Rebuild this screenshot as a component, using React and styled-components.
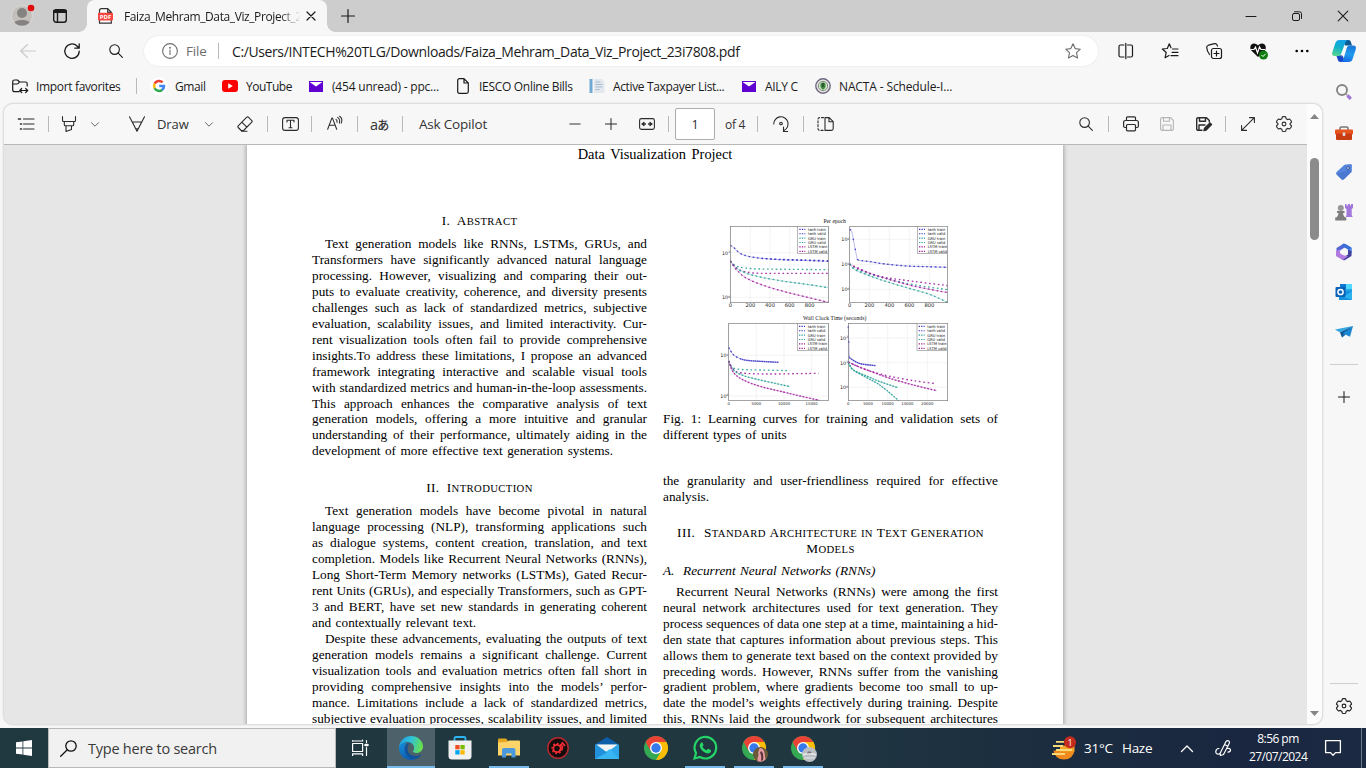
import React from "react";
import styled, { createGlobalStyle } from "styled-components";

const Global = createGlobalStyle`
  * { box-sizing: border-box; }
  html, body, #root { margin: 0; height: 768px; }
  body { overflow: hidden; background: #f7f7f7; font-family: "Open Sans", "Noto Sans", sans-serif; font-size: 12px; color: #1b1b1b; }
  svg { display: block; flex: none; overflow: visible; }
`;

/* ---------- shared parts ---------- */
const Window = styled.div`
  width: 1366px; height: 768px; display: flex; flex-direction: column; overflow: hidden;
`;
const Item = styled.div`
  flex: none; display: flex; align-items: center; justify-content: center;
  margin-left: ${(p) => p.$ml || 0}px; width: ${(p) => p.$w}px; color: ${(p) => p.$c || "inherit"};
`;
const Label = styled.span`
  flex: none; display: block; white-space: nowrap;
  margin-left: ${(p) => p.$ml || 0}px; width: ${(p) => p.$w}px;
  font-size: ${(p) => p.$fs || 12}px; letter-spacing: ${(p) => p.$ls || 0}px; color: ${(p) => p.$c || "#1b1b1b"};
`;
const Divider = styled.div`
  flex: none; width: 1px; height: ${(p) => p.$h || 16}px; background: ${(p) => p.$c || "#b9b9b9"}; margin-left: ${(p) => p.$ml}px; margin-right: ${(p) => p.$mr || 0}px;
`;
const Spacer = styled.div`flex: 1;`;

const Ico = ({ w = 16, h = 16, sw = 1.1, children, ...r }) => (
  <svg width={w} height={h} viewBox={`0 0 ${w} ${h}`} fill="none" stroke="currentColor" strokeWidth={sw} strokeLinecap="round" strokeLinejoin="round" {...r}>{children}</svg>
);

/* ---------- tab strip ---------- */
const TabStrip = styled.div`
  flex: none; height: 32px; background: #cdcdcd; display: flex; align-items: center;
`;
const Tab = styled.div`
  flex: none; position: relative; align-self: stretch; margin-left: 20px; width: 240px; background: #f7f7f7;
  border-radius: 8px 8px 0 0; display: flex; align-items: center;
  &::before, &::after {
    content: ""; position: absolute; bottom: 0; width: 8px; height: 8px;
  }
  &::before { left: -8px; background: radial-gradient(circle at 0 0, transparent 7.5px, #f7f7f7 8px); }
  &::after { right: -8px; background: radial-gradient(circle at 100% 0, transparent 7.5px, #f7f7f7 8px); }
`;
const TabTitle = styled(Label)`
  overflow: hidden;
  mask-image: linear-gradient(90deg, #000 155px, transparent 177px);
`;

/* ---------- navigation ---------- */
const NavBar = styled.div`
  flex: none; height: 38px; display: flex; align-items: center;
`;
const Address = styled.div`
  flex: none; margin-left: 20px; width: 954px; height: 30px; border-radius: 15px; background: #fff;
  display: flex; align-items: center; box-shadow: 0 0 2px rgba(0,0,0,.1);
`;

/* ---------- body ---------- */
const Body = styled.div`flex: 1; min-height: 0; display: flex;`;
const Main = styled.div`flex: none; width: 1323px; display: flex; flex-direction: column;`;
const Favorites = styled.div`flex: none; height: 33px; display: flex; align-items: center; padding-bottom: 1px;`;
const Viewer = styled.div`
  flex: none; margin-left: 3px; width: 1320px; height: 622px; border: 1px solid #dedede; border-radius: 10px;
  display: flex; overflow: hidden; background: #e6e6e6; box-shadow: 0 0 2px rgba(0,0,0,.12);
`;
const ViewerMain = styled.div`flex: none; width: 1303px; display: flex; flex-direction: column;`;
const PdfBar = styled.div`
  flex: none; height: 41px; background: #f7f7f7; border-bottom: 1px solid #b8b8b8; display: flex; align-items: center; color: #2b2b2b;
`;
const PageBox = styled.div`
  flex: none; margin-left: 6px; width: 40px; height: 32px; background: #fff; border: 1px solid #acacac; border-radius: 2px;
  display: flex; align-items: center; justify-content: center; font-size: 12.5px;
`;
const Translate = styled(Label)`
  font-family: "Open Sans", "Noto Sans CJK JP", sans-serif; font-weight: 500;
  small { font-size: 12px; }
`;
const Scroll = styled.div`
  flex: 1; background: #fcfcfc; display: flex; flex-direction: column; align-items: center; padding: 10px 0 8px;
`;
const Thumb = styled.div`width: 9px; height: 82px; border-radius: 5px; background: #8b8b8b; margin-top: 39px;`;

/* ---------- document ---------- */
const Canvas = styled.div`flex: 1; min-height: 0; overflow: hidden; padding-left: 243px;`;
const Sheet = styled.div`
  width: 816px; height: 700px; background: #fff; box-shadow: 0 0 4px 1px rgba(0,0,0,.28); padding: 2px 65px 0;
  font-family: "Liberation Serif", serif; font-size: 13.28px; line-height: 15.95px; color: #000;
`;
const DocTitle = styled.div`text-align: center; font-size: 14.4px; word-spacing: 2px; height: 66px; line-height: 15px;`;
const Columns = styled.div`display: flex; gap: 16px;`;
const Column = styled.div`flex: none; width: 335px;`;
const Heading = styled.div`
  text-align: center; text-transform: uppercase; word-spacing: ${(p) => p.$ws || 0}px; letter-spacing: ${(p) => p.$ls ?? 0.36}px;
  margin-top: ${(p) => p.$mt || 0}px; margin-bottom: ${(p) => p.$mb || 0}px; white-space: nowrap; height: 16px; font-size: 10.7px;
  b { font-weight: 400; font-size: 13.28px; }
`;
const SubHeading = styled.div`font-style: italic; margin: 6px 0 5px; word-spacing: 1px;`;
const Line = styled.div`
  white-space: nowrap; word-spacing: -1.6px; text-align-last: justify; padding-left: ${(p) => (p.$indent ? 13 : 0)}px;
`;
const LastLine = styled.div`white-space: nowrap; word-spacing: 1.15px;`;
const Gap = styled.div`flex: none; height: ${(p) => p.$h}px;`;

const Para = ({ lines, open, flush }) =>
  lines.map((l, i) => i === lines.length - 1 && !open
    ? <LastLine key={i}>{l}</LastLine>
    : <Line key={i} $indent={i === 0 && !flush}>{l}</Line>);

const ABSTRACT = [
  "Text generation models like RNNs, LSTMs, GRUs, and",
  "Transformers have significantly advanced natural language",
  "processing. However, visualizing and comparing their out-",
  "puts to evaluate creativity, coherence, and diversity presents",
  "challenges such as lack of standardized metrics, subjective",
  "evaluation, scalability issues, and limited interactivity. Cur-",
  "rent visualization tools often fail to provide comprehensive",
  "insights.To address these limitations, I propose an advanced",
  "framework integrating interactive and scalable visual tools",
  "with standardized metrics and human-in-the-loop assessments.",
  "This approach enhances the comparative analysis of text",
  "generation models, offering a more intuitive and granular",
  "understanding of their performance, ultimately aiding in the",
  "development of more effective text generation systems.",
];
const INTRO = [
  "Text generation models have become pivotal in natural",
  "language processing (NLP), transforming applications such",
  "as dialogue systems, content creation, translation, and text",
  "completion. Models like Recurrent Neural Networks (RNNs),",
  "Long Short-Term Memory networks (LSTMs), Gated Recur-",
  "rent Units (GRUs), and especially Transformers, such as GPT-",
  "3 and BERT, have set new standards in generating coherent",
  "and contextually relevant text.",
];
const INTRO2 = [
  "Despite these advancements, evaluating the outputs of text",
  "generation models remains a significant challenge. Current",
  "visualization tools and evaluation metrics often fall short in",
  "providing comprehensive insights into the models’ perfor-",
  "mance. Limitations include a lack of standardized metrics,",
  "subjective evaluation processes, scalability issues, and limited",
];
const RNN = [
  "Recurrent Neural Networks (RNNs) were among the first",
  "neural network architectures used for text generation. They",
  "process sequences of data one step at a time, maintaining a hid-",
  "den state that captures information about previous steps. This",
  "allows them to generate text based on the context provided by",
  "preceding words. However, RNNs suffer from the vanishing",
  "gradient problem, where gradients become too small to up-",
  "date the model’s weights effectively during training. Despite",
  "this, RNNs laid the groundwork for subsequent architectures",
];

/* ---------- figure ---------- */
const BLUE = "#3a35c4", TEAL = "#2aa198", PURP = "#a020a0";
const smooth = (pts) => {
  let d = `M${pts[0][0]} ${pts[0][1]}`;
  for (let i = 0; i < pts.length - 1; i++) {
    const p0 = pts[i - 1] || pts[i], p1 = pts[i], p2 = pts[i + 1], p3 = pts[i + 2] || p2;
    d += ` C${p1[0] + (p2[0] - p0[0]) / 6} ${p1[1] + (p2[1] - p0[1]) / 6} ${p2[0] - (p3[0] - p1[0]) / 6} ${p2[1] - (p3[1] - p1[1]) / 6} ${p2[0]} ${p2[1]}`;
  }
  return d;
};
const Curve = ({ c, pts, gap = 8, thin = 0.5 }) => (
  <g fill="none" stroke={c}>
    <path d={smooth(pts)} strokeWidth="2" opacity={thin} />
    <path d={smooth(pts)} strokeWidth="4" strokeDasharray={`5 ${gap}`} opacity=".9" />
  </g>
);
const LEGEND = [["tanh train", BLUE], ["tanh valid", BLUE], ["GRU train", TEAL], ["GRU valid", TEAL], ["LSTM train", PURP], ["LSTM valid", PURP]];
const Plot = ({ x, y, w, h, xt, yt, lx, children }) => (
  <g>
    {xt.map(([t, px]) => <g key={t}>
      <line x1={px} x2={px} y1={y} y2={y + h} stroke="#ddd" strokeWidth="1" />
      <text x={px} y={y + h + 14} fontSize={xt[1][0].length > 3 ? 11.5 : 15.5} textAnchor="middle" fontFamily="DejaVu Sans" fill="#222">{t}</text>
    </g>)}
    {yt.map(([e, py]) => <g key={e}>
      <line x1={x} x2={x + w} y1={py} y2={py} stroke="#ddd" strokeWidth="1" />
      <text x={x - 25} y={py + 6} fontSize="14.5" fontFamily="DejaVu Sans" fill="#222">10<tspan dy="-5" fontSize="9">{e}</tspan></text>
    </g>)}
    {children}
    <rect x={x} y={y} width={w} height={h} fill="none" stroke="#777" strokeWidth="2" />
    <rect x={lx} y={y} width={x + w - lx} height="82" fill="#fff" stroke="#777" strokeWidth="1.6" />
    {LEGEND.map(([t, c], i) => <g key={t}>
      <line x1={lx + 5} x2={lx + 23} y1={y + 9 + i * 13.2} y2={y + 9 + i * 13.2} stroke={c} strokeWidth="3.4" strokeDasharray="4 3.5" />
      <text x={lx + 31} y={y + 13.5 + i * 13.2} fontSize="11.6" textLength={t[0] === "L" ? 58 : 53} lengthAdjust="spacingAndGlyphs" fontFamily="DejaVu Sans" fill="#111">{t}</text>
    </g>)}
  </g>
);
const FigureBox = styled.div`margin: 0 0 1px 37px;`;
const Figure = () => (
  <FigureBox>
    <svg width="260" height="197" viewBox="0 9 780 591">
      <g fontFamily="Liberation Serif" fontSize="17" fill="#111" textAnchor="middle">
        <text x="404" y="38">Per epoch</text>
        <text x="404" y="330" textLength="190">Wall Clock Time (seconds)</text>
      </g>
      <Plot x={91} y={49} w={294} h={229} lx={293} xt={[["0", 91], ["200", 151], ["400", 210], ["600", 269], ["800", 329]]} yt={[["1", 128], ["0", 262]]}>
        <Curve c={BLUE} pts={[[91, 106], [104, 115], [120, 130], [145, 139], [185, 145], [240, 149], [310, 151], [385, 154]]} />
        <Curve c={BLUE} thin={0} pts={[[185, 145], [240, 148], [310, 150], [385, 152]]} />
        <Curve c={TEAL} thin={0} pts={[[91, 153], [108, 168], [135, 174], [180, 177], [270, 178], [385, 179]]} />
        <Curve c={PURP} thin={0} pts={[[91, 153], [110, 174], [135, 185], [180, 190], [270, 190], [385, 190]]} />
        <Curve c={TEAL} pts={[[91, 153], [110, 175], [140, 190], [190, 203], [260, 215], [320, 223], [385, 233]]} />
        <Curve c={PURP} pts={[[91, 153], [110, 180], [140, 205], [190, 226], [250, 244], [310, 259], [385, 277]]} />
      </Plot>
      <Plot x={449} y={49} w={294} h={229} lx={652} xt={[["0", 449], ["200", 508], ["400", 568], ["600", 628], ["800", 688]]} yt={[["2", 88], ["1", 163], ["0", 238]]}>
        <Curve c={BLUE} gap={26} pts={[[449, 58], [455, 64], [460, 88], [465, 115], [472, 149]]} />
        <Curve c={BLUE} pts={[[472, 149], [485, 152], [510, 155], [555, 162], [620, 168], [680, 170], [743, 172]]} />
        <Curve c={PURP} thin={0} pts={[[449, 162], [470, 172], [510, 190], [560, 203], [640, 214], [743, 227]]} />
        <Curve c={TEAL} thin={0} pts={[[449, 163], [470, 178], [510, 193], [560, 206], [640, 224], [743, 239]]} />
        <Curve c={PURP} pts={[[449, 162], [470, 174], [510, 190], [560, 206], [640, 228], [743, 248]]} />
        <Curve c={TEAL} pts={[[449, 163], [465, 179], [510, 198], [560, 215], [620, 233], [680, 250], [715, 264], [743, 278]]} />
      </Plot>
      <Plot x={86} y={340} w={299} h={232} lx={292} xt={[["0", 86], ["5000", 169], ["10000", 252], ["15000", 335]]} yt={[["1", 436], ["0", 558]]}>
        <Curve c={BLUE} gap={1.5} pts={[[120, 446], [140, 451], [180, 454], [236, 457]]} />
        <Curve c={BLUE} gap={7} pts={[[86, 412], [100, 434], [120, 446]]} />
        <Curve c={TEAL} thin={0} pts={[[86, 453], [97, 472], [120, 478], [180, 480], [270, 482]]} />
        <Curve c={PURP} thin={0} pts={[[86, 453], [100, 478], [125, 489], [200, 492], [290, 491], [356, 490]]} />
        <Curve c={TEAL} gap={5} pts={[[86, 453], [100, 480], [130, 497], [180, 510], [230, 521], [270, 530]]} />
        <Curve c={PURP} gap={5} pts={[[86, 453], [100, 487], [130, 510], [180, 529], [250, 546], [300, 558], [358, 571]]} />
      </Plot>
      <Plot x={445} y={340} w={298} h={232} lx={651} xt={[["0", 445], ["5000", 504], ["10000", 563], ["15000", 622], ["20000", 682]]} yt={[["2", 384], ["1", 458], ["0", 532]]}>
        <Curve c={BLUE} gap={40} pts={[[445, 349], [446, 390], [448, 442]]} />
        <Curve c={BLUE} gap={1.5} pts={[[448, 443], [465, 454], [485, 462], [527, 467]]} />
        <Curve c={PURP} thin={0} pts={[[445, 456], [480, 472], [520, 486], [570, 499], [640, 512], [708, 521]]} />
        <Curve c={PURP} gap={5} pts={[[445, 456], [480, 472], [520, 487], [570, 505], [640, 525], [710, 542]]} />
        <Curve c={TEAL} gap={4} pts={[[445, 458], [460, 480], [500, 498], [540, 515], [594, 533]]} />
        <Curve c={TEAL} gap={4} pts={[[445, 458], [460, 480], [500, 503], [530, 519], [560, 541], [596, 572]]} />
      </Plot>
    </svg>
  </FigureBox>
);

/* ---------- icons ---------- */
const Search = () => <Ico w={14} h={14}><circle cx="5.6" cy="5.6" r="4.8" /><path d="M9.2 9.2 13.4 13.4" /></Ico>;
const Plus = ({ s = 14 }) => <Ico w={14} h={14} width={s} height={s} sw={1.2}><path d="M7 .5v13M.5 7h13" /></Ico>;
const Gear = () => (
  <Ico w={16} h={16}><path d="M8 .5 9.700.8l.5 2 1.400.8 2-.6L14.800 4.300l.8 1.800-1.500 1.400v1l1.500 1.400-.8 1.800-1.200 1.300-2-.6-1.400.8-.5 2-1.700.3-1.700-.3-.5-2-1.400-.8-2 .6L1.200 11.700.4 9.900l1.500-1.400v-1L.4 6.100l.8-1.800L2.400 3l2 .6 1.400-.8.5-2z" /><circle cx="8" cy="8" r="1.900" /></Ico>
);
const Chevron = () => <Ico w={8} h={5} sw={1}><path d="M.5.7 4 4.200 7.500.7" /></Ico>;
const YMail = () => <svg width="14" height="11" viewBox="0 0 14 11"><path fill="#5f01d1" d="M0 0h14v11H0z" /><path fill="#fff" d="M.6 1h12.800L7 5.600z" /></svg>;
const Google = () => (
  <svg width="18" height="18" viewBox="0 0 18 18"><circle cx="9" cy="9" r="9" fill="#fff" />
    <g fill="none" strokeWidth="2.500"><path stroke="#ea4335" d="M4.600 6.600a5 5 0 0 1 8-1.200" /><path stroke="#fbbc05" d="M4.700 11.300a5 5 0 0 1 0-4.700" /><path stroke="#34a853" d="M12.300 12.700a5 5 0 0 1-7.700-1.500" /><path stroke="#4285f4" d="M9.200 9h4.800a5 5 0 0 1-1.800 3.800" /></g></svg>
);
const Copilot = () => (
  <svg width="24" height="22" viewBox="0 0 24 22">
    <defs>
      <linearGradient id="cp1" x1=".5" y1="0" x2=".2" y2="1"><stop offset="0" stopColor="#12a3e8" /><stop offset=".45" stopColor="#10b0cc" /><stop offset="1" stopColor="#58d68b" /></linearGradient>
      <linearGradient id="cp2" x1=".5" y1="0" x2=".3" y2="1"><stop offset="0" stopColor="#1a78d8" /><stop offset=".5" stopColor="#1f9cf0" /><stop offset="1" stopColor="#1568e6" /></linearGradient>
    </defs>
    <path fill="#0a5a94" d="M11 0h5.500c1.300 0 2 .8 2.400 2l1.100 3.500h-7z" />
    <path fill="#1747c4" d="M13 22H8.500c-1.500 0-2.200-.8-2.600-2L4.500 16l6-1z" />
    <path fill="url(#cp1)" d="M7.500 0H16c-1.800.4-2.700 2-3.200 3.700L9.300 13.500c-.6 1.700-1.400 2.500-3 2.500H2.700C.5 16-.4 14.400.2 12.500L3.300 3.300C4 1.200 5.300 0 7.500 0z" />
    <path fill="url(#cp2)" d="M16.500 22H8.500c1.700-.4 2.700-2 3.200-3.700l3-10.300c.5-1.600 1.400-2.500 3-2.500h3.600c2.200 0 3.100 1.700 2.500 3.800l-3.100 9.400c-.7 2.100-2 3.300-4.200 3.300z" />
    <path fill="#f4fafd" d="M14.700 5.800c-1 .4-1.700 1.200-2.100 2.400L10 15c-.2.700-.6 1.200-1.300 1.500 1.600-.2 2.600-1 3.100-2.500l2.100-6c.2-.9.500-1.600.8-2.200z" />
  </svg>
);
const Chrome = ({ children }) => (
  <svg width="24" height="24" viewBox="0 0 24 24">
    <circle cx="12" cy="12" r="12" fill="#34a853" />
    <path fill="#ea4335" d="M1.600 6A12 12 0 0 1 22.400 6H12L6.800 15z" />
    <path fill="#fbbc05" d="M22.400 6A12 12 0 0 1 12 24l5.200-9L12 6z" />
    <circle cx="12" cy="12" r="6" fill="#fff" /><circle cx="12" cy="12" r="4.700" fill="#3579ea" />{children}
  </svg>
);
const Edge = () => (
  <svg width="24" height="24" viewBox="0 0 24 24">
    <defs>
      <linearGradient id="eg1" x1="0" y1=".2" x2="1" y2=".4"><stop offset="0" stopColor="#1f9de0" /><stop offset=".5" stopColor="#30c2d8" /><stop offset="1" stopColor="#67e04c" /></linearGradient>
      <linearGradient id="eg2" x1="0" y1="0" x2=".5" y2="1"><stop offset="0" stopColor="#1590dc" /><stop offset="1" stopColor="#0d5cb0" /></linearGradient>
    </defs>
    <path fill="url(#eg2)" d="M0 11.500C.5 7.500 4 6 8 6.500c-2 1.500-2.500 4-2.300 6C6.200 19 11 23 17 22.800 15.500 23.600 13.700 24 12 24 5.500 24-.4 18.700 0 11.500z" />
    <path fill="#10529c" d="M8.500 11.500c-.8 4.500 3 8.500 8 8.500 2.500 0 4.500-.8 6-1.600-1.200 2.200-3.200 3.700-5.500 4.500C10.500 23 5.500 19 5.700 13c.2-3.500 2.300-6 5-6-1.200 1-2 2.500-2.200 4.500z" />
    <path fill="url(#eg1)" d="M.1 11C.6 4.800 5.700 0 12 0c7 0 12 5 12 10.500 0 4-3 6.500-6.800 6.500-2 0-3.500-.6-3.500-1.700 0-.8 1.300-1.200 1.300-3.600C15 9 12.500 6 8.500 6 4 6 1 8.500.1 11z" />
    <path fill="#4c6169" d="M10.700 8.700c2.500-.7 4.300.8 4.300 3 0 2.400-1.300 2.800-1.300 3.700 0 1 1.500 1.600 3.500 1.600-4.500 1.500-9-2-8-6 .2-1 .7-1.800 1.500-2.300z" />
  </svg>
);

/* ---------- side bar ---------- */
const Side = styled.div`flex: none; width: 43px; display: flex; flex-direction: column; align-items: center; padding: 12px 2px 0 0;`;
const SideItem = styled.div`flex: none; height: 20px; margin-bottom: 20px; display: flex; align-items: center; justify-content: center;`;
const SideRule = styled.div`flex: none; width: 28px; height: 1px; background: #cfcfcf; margin-top: ${(p) => p.$mt || 0}px;`;

/* ---------- task bar ---------- */
const Taskbar = styled.div`
  flex: none; height: 40px; display: flex; align-items: center; color: #fff;
  background: linear-gradient(90deg, #203840 0, #203740 780px, #1c2f40 1000px, #1a2640 1250px, #1b2a42 100%);
`;
const SearchBox = styled.div`
  flex: none; width: 288px; height: 40px; background: #f1f1f1; border: 1px solid #b9b9b9; display: flex; align-items: center;
`;
const AppTile = styled.div`
  flex: none; width: ${(p) => (p.$active ? 48 : 40)}px; margin-left: ${(p) => p.$ml ?? 9}px; height: 40px;
  display: flex; align-items: center; justify-content: center;
  background: ${(p) => (p.$active ? "#4c6169" : "transparent")};
  border-bottom: 2px solid ${(p) => (p.$open ? "#76b9ed" : "transparent")};
  border-top: 2px solid ${(p) => (p.$active ? "#4c6169" : "transparent")}; background-clip: padding-box;
`;
const Clock = styled.div`flex: none; margin-left: 18px; width: 58px; text-align: center; line-height: 18px; font-size: 12px; letter-spacing: -.55px; white-space: nowrap; color: #fff;`;

export default function App() {
  return (
    <Window>
      <Global />
      <TabStrip>
        <Item $ml={12} $w={22}>
          <svg width="22" height="22" viewBox="0 0 22 22"><circle cx="10" cy="11" r="10.500" fill="#c3c0bb" stroke="#d8d8d8" /><circle cx="10" cy="8" r="5" fill="#858381" /><path d="M2.500 17.500c1-3.500 14-3.500 15 0-1.500 2-4.500 3.300-7.500 3.300s-6-1.300-7.500-3.300z" fill="#858381" /><circle cx="19" cy="3" r="3.300" fill="#e30b0b" /></svg>
        </Item>
        <Item $ml={19} $w={14}><Ico w={14} h={14} sw={1.400}><rect x=".7" y=".7" width="12.600" height="12.600" rx="2.500" /><path d="M4.500 4v9" /><path d="M1 1.800h12M1 3h12" strokeWidth="2" /></Ico></Item>
        <Tab>
          <Item $ml={11} $w={15}>
            <svg width="15" height="16" viewBox="0 0 15 16"><path d="M1.500 15.200V2.500A1.800 1.800 0 0 1 3.300.7h6.400L13.300 4.300v10.900zM9.700.7v3.600h3.600" fill="#fff" stroke="#333" strokeWidth="1.200" /><rect y="4.800" width="15" height="7.800" rx="1" fill="#f5463f" /><text x="7.500" y="11" textAnchor="middle" fontSize="6" fontWeight="700" fill="#fff" fontFamily="Open Sans">PDF</text></svg>
          </Item>
          <TabTitle $ml={11} $w={176} $ls={-0.4}>Faiza_Mehram_Data_Viz_Project_23</TabTitle>
          <Item $ml={7} $w={8}><Ico w={8} h={8} sw={1.200}><path d="M0 0 8 8M8 0 0 8" /></Ico></Item>
        </Tab>
        <Item $ml={14} $w={14}><Plus /></Item>
        <Spacer />
        <Item $w={46}><Ico w={10} h={10} sw={1}><path d="M0 5.500h10" /></Ico></Item>
        <Item $w={46}><Ico w={10} h={10} sw={1}><rect x=".5" y="2.500" width="7" height="7" rx="1.500" /><path d="M2.500.8h5a2 2 0 0 1 2 2v4.700" /></Ico></Item>
        <Item $w={46}><Ico w={10} h={10}><path d="M.2.2 9.800 9.800M9.800.2.2 9.800" /></Ico></Item>
      </TabStrip>
      <NavBar>
        <Item $ml={20} $w={16} $c="#c9c9c9"><Ico><path d="M15.500 8H.7M7.500 1.500.7 8l6.800 6.500" /></Ico></Item>
        <Item $ml={28} $w={16}><Ico sw={1.300}><path d="M15.200 8.200A7.200 7.200 0 1 1 13 3l2 2M15.200.8v4.400h-4.400" /></Ico></Item>
        <Item $ml={28} $w={16}><Search /></Item>
        <Address>
          <Item $ml={18} $w={16} $c="#6e6e6e"><Ico><circle cx="8" cy="8" r="7.400" /><path d="M8 7v4.500" /><circle cx="8" cy="4.700" r=".4" /></Ico></Item>
          <Label $ml={8} $w={31} $c="#6e6e6e" $fs={13.500} $ls={-0.2}>File</Label>
          <Divider $ml={1} />
          <Label $ml={13} $w={830} $fs={14} $ls={-0.39}>C:/Users/INTECH%20TLG/Downloads/Faiza_Mehram_Data_Viz_Project_23i7808.pdf</Label>
          <Item $ml={3} $w={16} $c="#6e6e6e"><Ico><path d="m8 .8 2.200 4.800 5.100.6-3.800 3.500 1 5.200L8 12.400l-4.500 2.500 1-5.200L.7 6.200l5.100-.6z" /></Ico></Item>
        </Address>
        <Item $ml={20} $w={16}><Ico sw={1.200}><path d="M6 2H2.500Q1 2 1 3.500v9Q1 14 2.500 14H6M9.500 2H13q1.500 0 1.500 1.500v9q0 1.500-1.500 1.500H9.500M7.800.3v15.400" /></Ico></Item>
        <Item $ml={28} $w={16}><Ico sw={1.200}><path d="M9 4.800 7.300.8 5.300 5.500.3 6l3.900 3.500-1.100 5.200L7 12.500M10.500 6H16M10 9.300h6M9 12.700h7" /></Ico></Item>
        <Item $ml={28} $w={16}><Ico sw={1.200}><rect x="5.500" y="5.500" width="10" height="10" rx="2" /><path d="M10.500 8v5M8 10.500h5M3.500 11.500C2 9.500.8 6 .7 4.200.7 3 1.500 2.500 2.500 2.200L8.500.6c1.500-.3 2.200.3 2.600 1.300l.3 1.300" /></Ico></Item>
        <Item $ml={28} $w={18}>
          <svg width="18" height="18" viewBox="0 0 18 18"><path fill="#111" d="M8 15 1.300 8.500C-.6 6 .3 1.500 4 1.500c2 0 3.200 1 4 2 .8-1 2-2 4-2 3.700 0 4.700 4 3 7z" /><path d="M.5 7.500H4l1.500-2.300L7.500 11l2-6 1.500 2.500h4" fill="none" stroke="#fff" strokeWidth="1.200" /><circle cx="13.500" cy="13" r="4.500" fill="#107c10" /><path d="m11.500 13 1.500 1.500 2.700-2.700" stroke="#fff" fill="none" /></svg>
        </Item>
        <Item $ml={27} $w={14}><svg width="14" height="4" viewBox="0 0 14 4"><circle cx="1.700" cy="2" r="1.300" /><circle cx="7" cy="2" r="1.300" /><circle cx="12.300" cy="2" r="1.300" /></svg></Item>
        <Item $ml={23} $w={24}><Copilot /></Item>
      </NavBar>
      <Body>
        <Main>
          <Favorites>
            <Item $ml={12} $w={16}><Ico sw={1.200}><path d="M7 13.700H2.500Q.7 13.700.7 12V3.500Q.7 2 2.500 2h3l2 2H13.500q1.700 0 1.700 1.700V8M.8 6H5q1 0 2.500-2M8 12.500h7.500M9.700 10.500l-2 2 2 2M13.700 10.500l2 2-2 2" /></Ico></Item>
            <Label $ml={8} $w={99} $ls={-0.34}>Import favorites</Label>
            <Divider $ml={1} />
            <Item $ml={13} $w={18}><Google /></Item>
            <Label $ml={7} $w={46} $ls={-0.4}>Gmail</Label>
            <Item $ml={1} $w={16}><svg width="16" height="12" viewBox="0 0 16 12"><rect width="16" height="12" rx="3" fill="#f00" /><path d="M6.200 3.300v5.400L10.800 6z" fill="#fff" /></svg></Item>
            <Label $ml={8} $w={62} $ls={-0.48}>YouTube</Label>
            <Item $ml={1} $w={14}><YMail /></Item>
            <Label $ml={9} $w={123} $ls={-0.2}>(454 unread) - ppc...</Label>
            <Item $ml={1} $w={13}><Ico w={12} h={16} sw={1.200}><path d="M.7 2.500Q.7.700 2.500.7h4.500l4.300 4.300v8.500q0 1.800-1.800 1.800H2.500Q.7 15.300.7 13.500zM7 .7V5h4.300" /></Ico></Item>
            <Label $ml={10} $w={110} $ls={-0.3}>IESCO Online Bills</Label>
            <Item $ml={0} $w={16}><svg width="16" height="16" viewBox="0 0 16 16"><path fill="#6fa9d6" d="M.5 1h3v14h-3z" /><path fill="#e3e8ee" d="M5 1h8l2.500 3v11H5z" /><path stroke="#a7bccf" d="M6.500 4h5M6.500 6.500h7M6.500 9h7M6.500 11.500h4" /></svg></Item>
            <Label $ml={8} $w={128} $ls={-0.36}>Active Taxpayer List...</Label>
            <Item $ml={1} $w={14}><YMail /></Item>
            <Label $ml={9} $w={49} $ls={-0.3}>AILY C</Label>
            <Item $ml={1} $w={16}><svg width="16" height="16" viewBox="0 0 16 16"><circle cx="8" cy="8" r="7.200" fill="#e9ebe6" stroke="#6f6780" strokeWidth="1.400" /><circle cx="8" cy="8" r="4.700" fill="#d6e6d0" stroke="#7d8a7a" /><path d="M8 4.500c2.500 0 3 2 2.500 4S9 11.500 8 11.500 6 10.500 5.500 8.500s0-4 2.500-4z" fill="#3c8a3e" /><path d="M8 5v4" stroke="#222" /></svg></Item>
            <Label $ml={8} $w={120} $ls={-0.13}>NACTA - Schedule-I...</Label>
          </Favorites>
          <Viewer>
            <ViewerMain>
              <PdfBar>
                <Item $ml={14} $w={16}><Ico><path d="M5.500 3H16M5.500 8H16M5.500 13H16" /><path d="M.5 3h2M2.500 8h1M2.500 13h1" strokeWidth="1.600" /></Ico></Item>
                <Divider $ml={14} />
                <Item $ml={13} $w={14}><Ico w={14} h={16}><path d="M.5.5v4q0 1 1 1h11q1 0 1-1v-4M2.300 5.500v3.300q0 1 1 1h7.400q1 0 1-1V5.500M4 10v5.500l5.500-2V10" /></Ico></Item>
                <Item $ml={15} $w={8} $c="#666"><Chevron /></Item>
                <Item $ml={30} $w={16}><Ico><path d="M.5.7 8 15.300 15.500.7M3.300 6h9.400L8 15.300zM6.700 12.800h2.600" /></Ico></Item>
                <Label $ml={12} $w={36} $fs={13} $ls={-0.1} $c="#333">Draw</Label>
                <Item $ml={12} $w={8} $c="#666"><Chevron /></Item>
                <Item $ml={24} $w={16}><Ico><path d="M9.800 1.200q.8-.8 1.600 0l3.400 3.400q.8.8 0 1.600L6.500 14.500H4.200L1.200 11.500q-.8-.8 0-1.600zM4.800 6.200l5 5M4.500 15.200H10" /></Ico></Item>
                <Divider $ml={14} />
                <Item $ml={14} $w={17}><Ico w={17} h={14}><rect x=".6" y=".6" width="15.800" height="12.800" rx="2.500" /><path d="M5 5V3.300h7V5M8.500 3.300v7.500M7 10.800h3" /></Ico></Item>
                <Divider $ml={12} />
                <Item $ml={15} $w={16}><Ico><path d="M.7 14 5.200 2h.5L10.200 14M2.300 9.700h6.300M9.500 3.500q1.500 1.200 1 3.200M11.200 1.500q3 2.200 1.800 6M13.300.3Q17 3 15 7.500" transform="scale(.95)" /></Ico></Item>
                <Divider $ml={14} />
                <Translate $ml={12} $w={20} $fs={14.500} $ls={-0.8} $c="#333">a<small>あ</small></Translate>
                <Divider $ml={12} />
                <Label $ml={16} $w={90} $fs={13.500} $ls={-0.2} $c="#333">Ask Copilot</Label>
                <Item $ml={61} $w={10} $c="#777"><Ico w={10} h={2} sw={1.500}><path d="M0 1h10" /></Ico></Item>
                <Item $ml={25} $w={11}><Plus s={12} /></Item>
                <Item $ml={23} $w={16}><Ico w={16} h={12}><rect x=".6" y=".6" width="14.800" height="10.800" rx="1.800" /><path d="M3 6h3.500M5 4.500 3.200 6 5 7.500M13 6H9.500M11 4.500 12.800 6 11 7.500" strokeWidth="1.300" /></Ico></Item>
                <Divider $ml={13} />
                <PageBox>1</PageBox>
                <Label $ml={10} $w={28} $fs={12} $ls={-0.3} $c="#333">of 4</Label>
                <Divider $ml={4} />
                <Item $ml={15} $w={16}><Ico><path d="M.7 8A7.200 7.200 0 1 1 11 14.500M10.500 11v4.500h4.200" /><circle cx="8" cy="7.500" r="1.300" /></Ico></Item>
                <Divider $ml={14} />
                <Item $ml={13} $w={17}><Ico w={17} h={14}><path d="M6.500.6H3Q1 .6 1 2.600V11.400q0 2 2 2h3.500" strokeDasharray="2 1.800" /><path d="M8 .6h4.200l4 4v7q0 1.800-1.800 1.800H8zM12 .6v4.200h4.200" /></Ico></Item>
                <Item $ml={245} $w={14}><Search /></Item>
                <Divider $ml={15} />
                <Item $ml={14} $w={16}><Ico sw={1.200}><path d="M3.500 4.500V1.800q0-1 1-1h7q1 0 1 1v2.700M3.500 11.500h-1.500Q.6 11.500.6 10V6.500q0-2 2-2h10.800q2 0 2 2V10q0 1.500-1.500 1.500h-1.400" /><rect x="3.500" y="8.500" width="9" height="6.300" rx="1" /></Ico></Item>
                <Item $ml={21} $w={14} $c="#b5b5b5"><Ico w={14} h={14}><path d="M.6 2.300Q.6.600 2.300.6H10.500L13.400 3.500v8.200q0 1.700-1.700 1.700H2.300Q.6 13.400.6 11.700zM3.500.8v3.400h6V.8M3 13.200V8h8v5.200" /></Ico></Item>
                <Item $ml={22} $w={16}><Ico w={16} h={14} sw={1.400}><path d="M6 13.300H2.300Q.7 13.300.7 11.700V2.300Q.7.700 2.300.7H10.500L13.300 3.500V5M3.500.8v3.400h6V.8M3 13.200V8h6" /><path d="M8 13.500l.6-2.300L14 6l1.500 1.500L10.200 13z" fill="currentColor" /></Ico></Item>
                <Divider $ml={13} />
                <Item $ml={15} $w={14}><Ico w={14} h={14}><path d="M.6 13.400 13.400.6M8.500.6h4.900v4.900M.6 8.500v4.900h4.900" /></Ico></Item>
                <Item $ml={21} $w={16}><Gear /></Item>
              </PdfBar>
              <Canvas>
                <Sheet>
                  <DocTitle>Data Visualization Project</DocTitle>
                  <Columns>
                    <Column>
                      <Heading $mb={7}><b>I.&nbsp; A</b>bstract</Heading>
                      <Para lines={ABSTRACT} />
                      <Heading $mt={21} $mb={7}><b>II.&nbsp; I</b>ntroduction</Heading>
                      <Para lines={INTRO} />
                      <Para lines={INTRO2} open />
                    </Column>
                    <Column>
                      <Figure />
                      <Para lines={["Fig. 1: Learning curves for training and validation sets of", "different types of units"]} flush />
                      <Gap $h={30} />
                      <Para lines={["the granularity and user-friendliness required for effective", "analysis."]} flush />
                      <Gap $h={20} />
                      <Heading $ws={0.8}><b>III.&nbsp; S</b>tandard <b>A</b>rchitecture in <b>T</b>ext <b>G</b>eneration</Heading>
                      <Heading><b>M</b>odels</Heading>
                      <SubHeading>A.&nbsp; Recurrent Neural Networks (RNNs)</SubHeading>
                      <Para lines={RNN} open />
                    </Column>
                  </Columns>
                </Sheet>
              </Canvas>
            </ViewerMain>
            <Scroll>
              <svg width="9" height="5" viewBox="0 0 9 5"><path d="M4.500 0 9 5H0z" fill="#858585" /></svg>
              <Thumb />
              <Spacer />
              <svg width="9" height="5" viewBox="0 0 9 5"><path d="M4.500 5 9 0H0z" fill="#858585" /></svg>
            </Scroll>
          </Viewer>
        </Main>
        <Side>
          <SideItem><svg width="16" height="16" viewBox="0 0 16 16"><circle cx="6" cy="6" r="5" fill="none" stroke="#848484" strokeWidth="1.900" /><path d="m9.500 9.500 2 2" stroke="#999" strokeWidth="1.500" /><path d="m11.500 11.500 3.300 3.300" stroke="#a074d6" strokeWidth="3.200" /></svg></SideItem>
          <SideItem><svg width="18" height="16" viewBox="0 -2 18 16"><path d="M5 4V2.200Q5 1 6.200 1h5.600Q13 1 13 2.200V4" fill="none" stroke="#777" strokeWidth="1.500" /><rect y="3.500" width="18" height="5" rx="1" fill="#e8541d" /><rect x="1" y="7.500" width="16" height="6.500" rx="1" fill="#c93c12" /><rect x="7.700" y="6.500" width="2.600" height="3.500" rx=".8" fill="#ddd" /></svg></SideItem>
          <SideItem><svg width="18" height="18" viewBox="0 0 18 18"><path d="M9.500 1.800 15.500 1q1.500 0 1.500 1.500L16.500 9 9 16.300q-1.300 1.200-2.600 0L1.600 11.500q-1.200-1.300 0-2.600z" fill="#5585dd" /><path d="M1.300 11 6.800 16.700 9 16.300 16.500 9 17 6z" fill="#3f6cc6" opacity=".5" /><circle cx="13" cy="5" r="1.400" fill="#eee" stroke="#2c4fa0" /></svg></SideItem>
          <SideItem><svg width="18" height="18" viewBox="0 0 18 18"><path d="M10 1h1.500v1.500H13V1h2v1.500h1V1h2v4l-1.300 1v6l1 2h-7l.8-2V6L10 5z" fill="#a277dc" /><circle cx="5.800" cy="5" r="3" fill="#979797" /><path d="M2 8h7.500v2H8q0 2.800 1.800 4.300H11q1 3.200-.5 3.200H1q-1.500 0-.5-3.200h1.300Q3.500 12.500 3.500 10H2z" fill="#7d7d7d" /></svg></SideItem>
          <SideItem>
            <svg width="18" height="18" viewBox="0 0 18 18">
              <path d="M9 .5 1.500 5v8.300L5 11V7.500l7-4.500z" fill="#5266d4" />
              <path d="M7 1.500Q9 0 11 1.300L16.500 4.500V11L13 8.700V6.500L7 3z" fill="#3a6fd8" />
              <path d="M9 5.500 13 7.500 16.500 4.700V9z" fill="#4b8be6" />
              <path d="M16.500 8v5L10 17q-1 .6-2 0L6 15.700 13 11.500V7z" fill="#45409e" />
              <path d="M1 8v4.500Q1 13 2 13.700L8 17l5-4-4-.5-4-2.200V6.500z" fill="#b07ae0" />
              <circle cx="9" cy="9" r="3" fill="#f7f7f7" />
            </svg>
          </SideItem>
          <SideItem><svg width="18" height="18" viewBox="0 0 18 18"><path d="M5 1h12v8H5z" fill="#28a8ea" /><path d="M5 1h6v5H5z" fill="#0f78d4" /><path d="M11 1h6v5h-6z" fill="#50d9ff" /><path d="M4 9l13-1.500V16q0 1-1 1H4z" fill="#1490df" /><path d="m17 8-9 6 9 2.500z" fill="#2ab3f0" /><rect x=".5" y="4" width="10" height="10" rx="1" fill="#0a62b8" /><circle cx="5.500" cy="9" r="2.600" fill="none" stroke="#fff" strokeWidth="1.500" /></svg></SideItem>
          <SideItem><svg width="18" height="12" viewBox="0 0 18 14" preserveAspectRatio="none"><path d="M18 0 0 4 5 7.500z" fill="#35a7e2" /><path d="M18 0 5 7.500 7 13.500z" fill="#0c4f8c" /><path d="M18 0 7.500 8.500 15 12.500z" fill="#1b87d2" /><path d="M7 13.500 7.500 8.500l3 1.700z" fill="#1466a8" /></svg></SideItem>
          <SideRule $mt={2} />
          <Gap $h={26} />
          <Plus s={12} />
          <Spacer />
          <SideRule />
          <Gap $h={14} />
          <Gear />
          <Gap $h={14} />
        </Side>
      </Body>
      <Taskbar>
        <Item $w={48}><svg width="16" height="16" viewBox="0 0 16 16" fill="#fff"><path d="M0 2.300 6.500 1.400v6.200H0zM7.300 1.300 16 0v7.600H7.300zM0 8.400h6.500v6.200L0 13.700zM7.300 8.400H16V16l-8.700-1.300z" /></svg></Item>
        <SearchBox>
          <Item $ml={11} $w={17} $c="#111"><Ico w={17} h={17} sw={1.300}><circle cx="11" cy="6" r="5.200" /><path d="M7.300 9.700.7 16.300" /></Ico></Item>
          <Label $ml={11} $w={200} $fs={14.500} $ls={-0.24} $c="#3a3a3a">Type here to search</Label>
        </SearchBox>
        <Item $ml={15} $w={18}><Ico sw={1.200}><path d="M.6 1.200V.5M.6 3.500h10v8H.6zM.6 1h10M.6 15.500v-1.700h10v1.700M10.600 1v-.8M14.500.5v2M14.500 7.500v8" /><path d="M13.500 5h2" strokeWidth="2.500" /></Ico></Item>
        <AppTile $active $open $ml={18}><Edge /></AppTile>
        <AppTile $ml={5}><svg width="24" height="24" viewBox="0 0 24 24"><path d="M6.500 5V2.500Q6.500 1 8 1h8q1.500 0 1.500 1.500V5" fill="none" stroke="#2fb4f2" strokeWidth="1.800" /><path d="M.5 4.500h23V20q0 3.500-3.500 3.500H4Q.5 23.500.5 20z" fill="#f1f1f1" /><path fill="#f25022" d="M7.300 9h4.300v4.300H7.300z" /><path fill="#7fba00" d="M12.400 9h4.300v4.300h-4.300z" /><path fill="#00a4ef" d="M7.300 14.200h4.300v4.300H7.300z" /><path fill="#ffb900" d="M12.400 14.200h4.300v4.300h-4.300z" /></svg></AppTile>
        <AppTile $open><svg width="22" height="20" viewBox="0 0 22 20"><path fill="#e6a720" d="M0 1.500Q0 .500 1 .500h7l2 2.500v4H0z" /><path fill="#fcd46a" d="M0 4.500 9 4l2-1.500h10q1 0 1 1V17.500H0z" /><path fill="#4a99dc" d="M4 19.500V12q0-2 2-2h9.500q2 0 2 2v7.500h-4V15.500h-5.500v4z" /></svg></AppTile>
        <AppTile><svg width="22" height="22" viewBox="0 0 22 22"><circle cx="11" cy="11" r="10.200" fill="#120c0c" stroke="#b8292d" strokeWidth="1.500" /><circle cx="10" cy="11.500" r="3.700" fill="none" stroke="#f22c32" strokeWidth="1.800" /><circle cx="10" cy="11.500" r="5" fill="none" stroke="#f22c32" strokeWidth="1.500" strokeDasharray="1.800 2" /><path d="M12 13.500q3.500 0 3.500-5M13 9l2.500-3L18 9" fill="none" stroke="#f22c32" strokeWidth="1.800" /></svg></AppTile>
        <AppTile><svg width="24" height="22" viewBox="0 0 24 22"><path d="M0 7.500 12 0l12 7.500z" fill="#0f5ea8" /><path d="M0 7.500h24V22H0z" fill="#2ea5e9" /><path d="M1.500 7.500h21L12 15.500z" fill="#f5f5f5" /><path d="M0 22 15 12l9 10z" fill="#38b6f3" /><path d="M0 7.500 12 15.500 0 22z" fill="#2390dc" /></svg></AppTile>
        <AppTile><Chrome /></AppTile>
        <AppTile $open><svg width="24" height="24" viewBox="0 0 24 24"><path d="M1.500 22.500 3 17A10.800 10.800 0 1 1 7 21z" fill="none" stroke="#25d366" strokeWidth="2.200" /><path d="M8.200 6.500q1-.5 1.500.5l.8 2q0 .7-1 1.700 1.300 2.600 4 3.600l1.200-1.300q.4-.4 1 0l2 1q.6.4.3 1.500-1 2.200-3.500 2Q8.500 16 6.700 10.500q-.2-2.500 1.500-4z" fill="#25d366" /></svg></AppTile>
        <AppTile $open><Chrome><circle cx="18.500" cy="18.500" r="7.500" fill="#6b5a3a" /><path d="M18 12q4 0 4.500 5l1 6.500q-4 3.500-8 1.500 0-4 1-6-1-4 1.500-7z" fill="#e59aa3" /><path d="M19 15q3 2 2 9l-2 1q1-6-1-8z" fill="#57303a" /></Chrome></AppTile>
        <AppTile $open><Chrome><circle cx="18.500" cy="18.500" r="7.500" fill="#b9bfc3" /><path d="M12 18q6-3 13 0v1.500q-6-2-13 0z" fill="#e7e9ea" /><path d="M15.500 17.500q3-4 5.500-.5z" fill="#77797a" /><path d="M13.500 22h10" stroke="#d8dcdf" strokeWidth="1.500" /></Chrome></AppTile>
        <Spacer />
        <Item $w={24}>
          <svg width="24" height="24" viewBox="0 0 24 24"><path d="M1.500 14.500h21Q21 23.500 12 23.500T1.500 14.500z" fill="#f08a1d" /><path d="M8 9.500h14.500v6H8z" fill="#f5a32a" /><path d="M4 5.800h8M1 10h10M4 14h16M0 18h13" stroke="#f8d978" strokeWidth="1.800" /><circle cx="18" cy="6.300" r="6" fill="#c42b1c" /><text x="18" y="9.500" fontSize="9" textAnchor="middle" fill="#fff" fontFamily="Open Sans">1</text></svg>
        </Item>
        <Label $ml={8} $w={38} $fs={13.500} $ls={-0.2} $c="#fff">31°C</Label>
        <Label $w={59} $fs={13.500} $ls={-0.3} $c="#fff">Haze</Label>
        <Item $w={12}><Ico w={12} h={7} sw={1.300}><path d="M.5 6.500 6 1l5.500 5.500" /></Ico></Item>
        <Item $ml={22} $w={16}><Ico sw={1.200}><path d="M4 8.500Q1 8.500.8 11.500T4 14q2-1 2.500-3.500M5 13.500 11 1.500q1.500-1.500 2.800-.5 1.200 1 .5 2.300L8.500 14.500l-3 1zM9.500 4.500l3 1.500M12.500 8.500q2.500-.5 3 1.200.2 2-2.500 2.500" /></Ico></Item>
        <Clock>8:56 pm<br />27/07/2024</Clock>
        <Item $ml={18} $w={16}><Ico w={16} h={16} sw={1.300}><path d="M.6.6h14.800v12H10.500L8 15.300 5.500 12.600H.6z" /></Ico></Item>
        <Divider $h={40} $c="#6d7786" $ml={20} $mr={4} />
      </Taskbar>
    </Window>
  );
}
